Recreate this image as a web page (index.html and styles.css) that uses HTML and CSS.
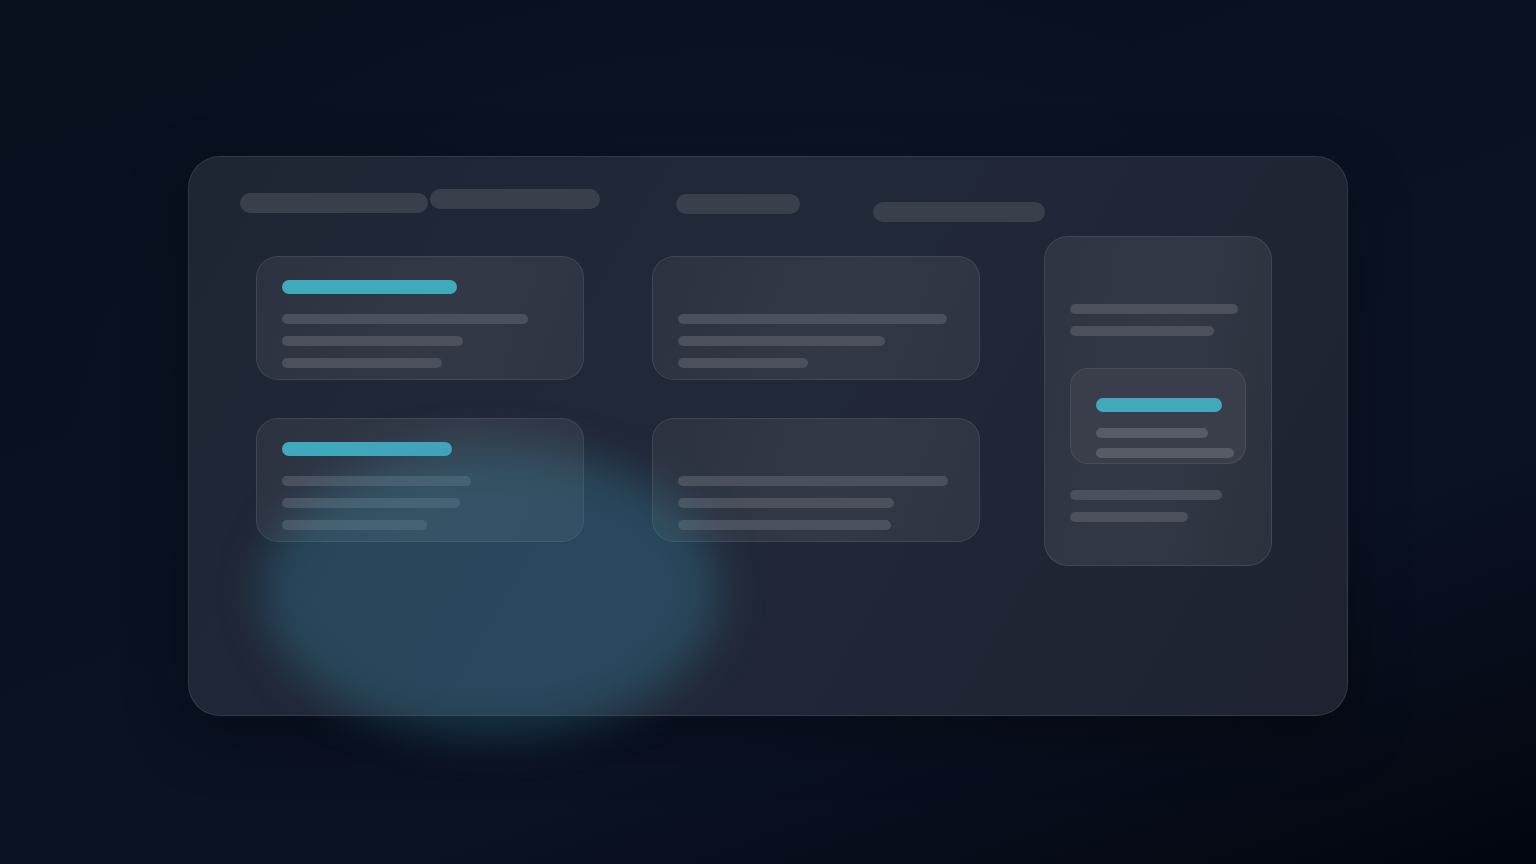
FILE: index.html
```html
<!DOCTYPE html>
<html lang="en">
<head>
<meta charset="utf-8">
<title>Dashboard</title>
<link rel="stylesheet" href="styles.css">
</head>
<body>
<div class="panel">
  <div class="header">
    <div class="pill pill-a"></div>
    <div class="pill pill-b"></div>
    <div class="pill pill-c"></div>
    <div class="pill pill-d"></div>
  </div>
  <div class="body">
    <div class="grid">
      <div class="card">
        <div class="accent" style="width:175px"></div>
        <div class="line" style="width:246px"></div>
        <div class="line" style="width:181px"></div>
        <div class="line" style="width:160px"></div>
      </div>
      <div class="card">
        <div class="line" style="width:269px"></div>
        <div class="line" style="width:207px"></div>
        <div class="line" style="width:130px"></div>
      </div>
      <div class="card">
        <div class="accent" style="width:170px"></div>
        <div class="line" style="width:189px"></div>
        <div class="line" style="width:178px"></div>
        <div class="line" style="width:145px"></div>
      </div>
      <div class="card">
        <div class="line" style="width:270px"></div>
        <div class="line" style="width:216px"></div>
        <div class="line" style="width:213px"></div>
      </div>
    </div>
    <div class="side">
      <div class="line" style="width:168px"></div>
      <div class="line" style="width:144px"></div>
      <div class="inner">
        <div class="accent" style="width:126px"></div>
        <div class="line light" style="width:112px"></div>
        <div class="line light" style="width:138px"></div>
      </div>
      <div class="line" style="width:152px"></div>
      <div class="line" style="width:118px"></div>
    </div>
  </div>
</div>
<div class="glow"></div>
</body>
</html>
```
FILE: styles.css
```css
html, body {
  margin: 0;
  padding: 0;
}
body {
  width: 1536px;
  height: 864px;
  overflow: hidden;
  position: relative;
  font-family: "Inter", "Liberation Sans", sans-serif;
  background:
    radial-gradient(ellipse 900px 600px at 45% 40%, rgba(20, 30, 50, 0.35), transparent 70%),
    linear-gradient(160deg, #07101d 0%, #0a1222 45%, #0b1224 70%, #02060e 100%);
}
.panel {
  box-sizing: border-box;
  width: 1160px;
  height: 560px;
  margin: 156px 0 0 188px;
  border: 1px solid rgba(255, 255, 255, 0.09);
  border-radius: 32px;
  background: linear-gradient(120deg, #1e2533 0%, #212838 45%, #1f2331 100%);
  box-shadow: 0 20px 60px rgba(0, 0, 0, 0.35);
}
.header {
  display: flex;
  align-items: flex-start;
  padding: 32px 0 0 51px;
}
.pill {
  height: 20px;
  border-radius: 10px;
  background: #3a404b;
}
.pill-a { width: 188px; margin-top: 4px; }
.pill-b { width: 170px; margin-left: 2px; }
.pill-c { width: 124px; margin-left: 76px; margin-top: 5px; }
.pill-d { width: 172px; margin-left: 73px; margin-top: 13px; }
.body {
  display: flex;
  align-items: flex-start;
  gap: 64px;
  padding: 14px 0 0 67px;
}
.grid {
  margin-top: 20px;
  display: grid;
  grid-template-columns: 328px 328px;
  grid-auto-rows: 124px;
  column-gap: 68px;
  row-gap: 38px;
}
.card {
  box-sizing: border-box;
  display: flex;
  flex-direction: column;
  justify-content: flex-end;
  gap: 12px;
  padding: 23px 25px 11px;
  border: 1px solid rgba(255, 255, 255, 0.09);
  border-radius: 22px;
  background: linear-gradient(110deg, #2c3240 0%, #323845 55%, #2f3442 100%);
}
.accent {
  height: 14px;
  border-radius: 7px;
  background: #41a9bc;
  margin-bottom: 8px;
}
.line {
  height: 10px;
  border-radius: 5px;
  background: #4b505c;
  flex-shrink: 0;
}
.side {
  box-sizing: border-box;
  width: 228px;
  height: 330px;
  display: flex;
  flex-direction: column;
  gap: 12px;
  padding: 67px 25px 0;
  border: 1px solid rgba(255, 255, 255, 0.09);
  border-radius: 24px;
  background: linear-gradient(100deg, #2e3441 0%, #323845 50%, #2c313e 100%);
}
.inner {
  box-sizing: border-box;
  width: 176px;
  height: 96px;
  margin: 20px 0 14px;
  display: flex;
  flex-direction: column;
  padding: 29px 25px 0;
  border: 1px solid rgba(255, 255, 255, 0.08);
  border-radius: 18px;
  background: #393e4a;
}
.inner .accent {
  margin-bottom: 16px;
}
.inner .line + .line {
  margin-top: 10px;
}
.line.light {
  background: #565b66;
}
.glow {
  position: absolute;
  left: 262px;
  top: 446px;
  width: 458px;
  height: 290px;
  border-radius: 50%;
  background: rgba(58, 140, 172, 0.32);
  filter: blur(22px);
  pointer-events: none;
}
```
